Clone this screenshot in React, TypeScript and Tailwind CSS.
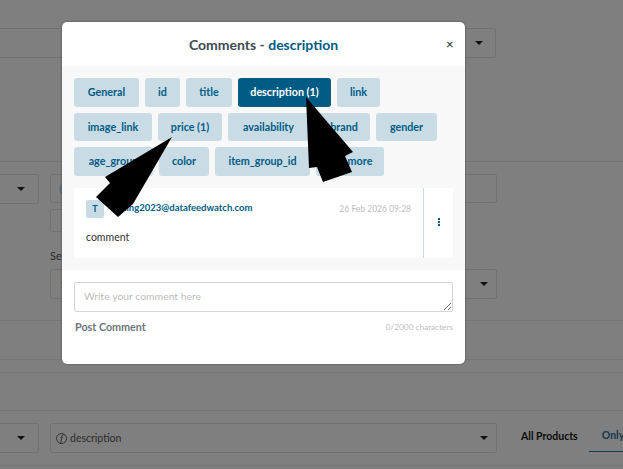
const chipRows = [
  { h: "h-[29px]", chips: [["General", "w-[65px]"], ["id", "w-[35px]"], ["title", "w-[46px]"], ["description (1)", "w-[93px]", true], ["link", "w-[43px]"]] },
  { h: "h-[28px]", chips: [["image_link", "w-[78px]"], ["price (1)", "w-[64px]"], ["availability", "w-[81px]"], ["brand", "w-[55px] pl-[3px]"], ["gender", "w-[61px]"]] },
  { h: "h-[29px]", chips: [["age_group", "w-[79px]"], ["color", "w-[50px]"], ["item_group_id", "w-[95px]"], ["more", "w-[68px] pl-[20px]"]] },
] as { h: string; chips: [string, string, boolean?][] }[];

function Caret() {
  return <span className="w-0 h-0 border-x-[4px] border-x-transparent border-t-[4px] border-t-[#111]" />;
}

function Box({ className, children }: { className: string; children?: any }) {
  return <div className={`border border-[#717171] rounded-[2px] flex items-center ${className}`}>{children}</div>;
}

export default function App() {
  return (
    <div className="relative w-[623px] h-[469px] overflow-hidden bg-[#7f7f7f] font-['Lato',sans-serif]">
      <div className="pt-[28px] h-[162px] border-b border-[#757575]">
        <Box className="-ml-[10px] w-[506px] h-[30px] justify-end pr-[12px]"><Caret /></Box>
      </div>
      <div className="h-[159px] border-b border-[#757575] pt-[12px] flex gap-[11px]">
        <Box className="-ml-[10px] w-[49px] h-[30px] justify-end pr-[13px] shrink-0"><Caret /></Box>
        <div className="flex-1 pr-[126px] flex flex-col">
          <Box className="h-[29px] pl-[8px]"><span className="w-[14px] h-[14px] rounded-full bg-[#62717b]" /></Box>
          <Box className="h-[23px] w-[60px] mt-[6px]" />
          <div className="mt-[17px] h-[14px] text-[11px] leading-[14px] text-[#2c2c2c]">Select</div>
          <Box className="h-[30px] mt-[6px] justify-between pl-[10px] pr-[8px]">
            <span className="text-[10px] text-[#4a3a20]">S</span><Caret />
          </Box>
        </div>
      </div>
      <div className="h-[39px] border-b border-[#757575]" />
      <div className="h-[13px] border-b border-[#757575]" />
      <div className="h-[38px] border-b border-[#757575]" />
      <div className="h-[55px] border-b border-[#757575] pt-[12px] flex">
        <Box className="-ml-[10px] w-[49px] h-[30px] justify-end pr-[13px] shrink-0"><Caret /></Box>
        <Box className="ml-[11px] w-[447px] h-[30px] pl-[5px] pr-[8px] gap-[3px] shrink-0">
          <span className="w-[11px] h-[11px] rounded-full border border-[#333] text-[10px] leading-[9px] italic text-center font-['Liberation_Serif',serif] text-[#222]">f</span>
          <span className="flex-1 text-[10.5px] leading-[12px] pb-[1px] text-[#2c2c2c]">description</span>
          <Caret />
        </Box>
        <div className="ml-[24px] h-[29px] pb-[2px] flex items-center text-[10.5px] font-bold text-[#0c0c0c] shrink-0">All Products</div>
        <div className="ml-[11px] h-[29px] pl-[13px] w-[60px] flex items-center border-b border-[#12394f] text-[10.5px] font-bold text-[#12394f] shrink-0 pb-[2px]">Only</div>
      </div>

      <div className="absolute left-[62px] top-[22px] w-[403px] h-[342px] bg-white rounded-[5px] flex flex-col shadow-[0_0_2px_rgba(0,0,0,0.5)]">
        <div className="relative h-[44px] flex items-center justify-center text-[14px] font-bold text-[#3d4a52]">
          <span>Comments - <span className="text-[#005b85]">description</span></span>
          <span className="absolute left-[384px] top-[14px] text-[13px] leading-[16px] font-normal text-[#222]">×</span>
        </div>
        <div className="h-[204px] bg-[#f8f8f8] px-[12px] pt-[12px]">
          <div className="flex flex-col gap-[6px]">
            {chipRows.map((row, i) => (
              <div key={i} className="flex gap-[6px]">
                {row.chips.map(([label, w, active]) => (
                  <div key={label} className={`${w} ${row.h} shrink-0 rounded-[3px] flex items-center justify-center text-[10.75px] font-bold ${active ? "bg-[#005b85] text-white" : "bg-[#c9dce6] text-[#005b85]"}`}>{label}</div>
                ))}
              </div>
            ))}
          </div>
          <div className="mt-[12px] h-[70px] w-[379px] bg-white rounded-[2px] flex">
            <div className="flex-1 pl-[12px] pr-[12px] pt-[12px]">
              <div className="flex items-start">
                <div className="w-[18px] h-[18px] bg-[#c9dce6] rounded-[2px] text-[#005b85] text-[9px] font-bold flex items-center justify-center">T</div>
                <span className="ml-[6px] mt-[1px] text-[9.5px] leading-[14px] font-bold text-[#005b85] flex-1">testing2023@datafeedwatch.com</span>
                <span className="mt-[1px] text-[8.5px] leading-[16px] text-[#bdbdbd]">26 Feb 2026 09:28</span>
              </div>
              <div className="mt-[12px] text-[10.5px] leading-[14px] text-[#333]">comment</div>
            </div>
            <div className="w-[30px] border-l border-[#c9dce6] flex flex-col items-center justify-center gap-[1px] pb-[3px]">
              <span className="w-[2px] h-[2px] bg-[#005b85]" /><span className="w-[2px] h-[2px] bg-[#005b85]" /><span className="w-[2px] h-[2px] bg-[#005b85]" />
            </div>
          </div>
        </div>
        <div className="px-[12px] pt-[12px]">
          <textarea readOnly placeholder="Write your comment here" className="block w-[379px] h-[30px] border border-[#d4d4d4] rounded-[2px] px-[9px] py-[6px] text-[10.4px] leading-[14px] outline-none placeholder:text-[#bdbdbd]" />
          <div className="flex justify-between items-center mt-[7px] pl-[1px]">
            <span className="text-[10.75px] font-bold text-[#6c757d]">Post Comment</span>
            <span className="text-[8.25px] text-[#bdbdbd]">0/2000 characters</span>
          </div>
        </div>
      </div>

      <svg className="absolute left-0 top-0" width="623" height="469" viewBox="0 0 623 469">
        <polygon fill="#000" points="172,137 105,177 110,183 96,197 118,217 133,204" />
        <polygon fill="#000" points="306,97 353,152 345,156 352,172 323,182 317,167 309,168" />
      </svg>
    </div>
  );
}
